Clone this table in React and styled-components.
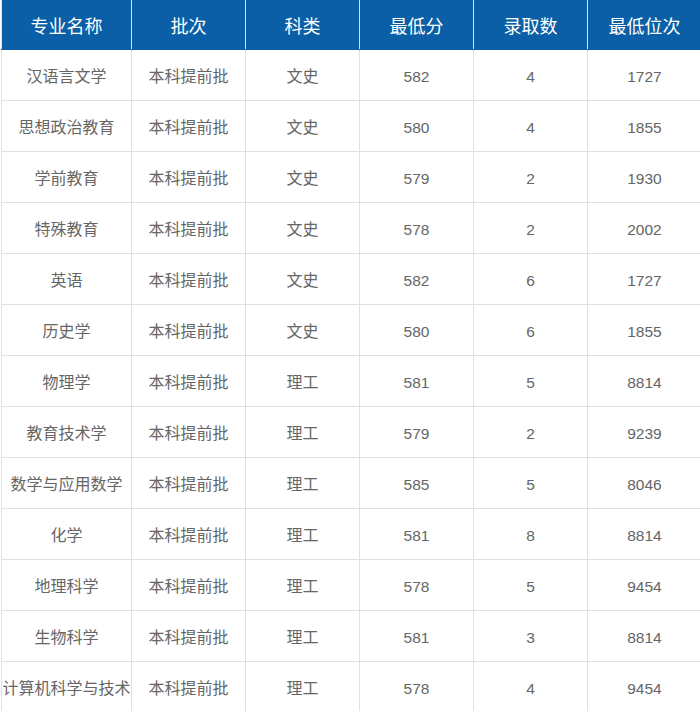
import React from "react";
import styled, { createGlobalStyle } from "styled-components";

const Global = createGlobalStyle`
  html, body { margin: 0; padding: 0; background: #fff; }
  body { overflow: hidden; }
`;

const Wrap = styled.div`
  padding-left: 1px;
  width: 720px;
`;

const Table = styled.table`
  border-collapse: collapse;
  table-layout: fixed;
  width: 700px;
  font-family: "Noto Sans CJK SC", "Microsoft YaHei", sans-serif;
`;

const Col = styled.col`
  width: ${(p) => (p.$wide ? "130px" : "114px")};
`;

const Th = styled.th`
  height: 49px;
  padding: 0;
  background: #0a5fa6;
  color: #fff;
  font-size: 18px;
  font-weight: normal;
  text-align: center;
  border: 1px solid #e0e0e0;
  border-left-color: ${(p) => (p.$first ? "#e0e0e0" : "#fff")};
  border-top: none;
  border-bottom-color: #0a5fa6;
`;

const Td = styled.td`
  height: 50px;
  padding: 0;
  color: #666;
  font-size: 16px;
  text-align: center;
  border: 1px solid #e0e0e0;
  white-space: nowrap;
  overflow: hidden;
`;

const Num = styled(Td)`
  font-family: "Liberation Sans", Arial, sans-serif;
  font-size: 15.5px;
  padding-top: 3px;
  height: 47px;
`;

const headers = ["专业名称", "批次", "科类", "最低分", "录取数", "最低位次"];
const rows = [
  ["汉语言文学", "本科提前批", "文史", "582", "4", "1727"],
  ["思想政治教育", "本科提前批", "文史", "580", "4", "1855"],
  ["学前教育", "本科提前批", "文史", "579", "2", "1930"],
  ["特殊教育", "本科提前批", "文史", "578", "2", "2002"],
  ["英语", "本科提前批", "文史", "582", "6", "1727"],
  ["历史学", "本科提前批", "文史", "580", "6", "1855"],
  ["物理学", "本科提前批", "理工", "581", "5", "8814"],
  ["教育技术学", "本科提前批", "理工", "579", "2", "9239"],
  ["数学与应用数学", "本科提前批", "理工", "585", "5", "8046"],
  ["化学", "本科提前批", "理工", "581", "8", "8814"],
  ["地理科学", "本科提前批", "理工", "578", "5", "9454"],
  ["生物科学", "本科提前批", "理工", "581", "3", "8814"],
  ["计算机科学与技术", "本科提前批", "理工", "578", "4", "9454"],
];

export default function App() {
  return (
    <Wrap>
      <Global />
      <Table>
        <colgroup>
          {headers.map((h, i) => (
            <Col key={h} $wide={i === 0} />
          ))}
        </colgroup>
        <thead>
          <tr>
            {headers.map((h, i) => (
              <Th key={h} $first={i === 0}>{h}</Th>
            ))}
          </tr>
        </thead>
        <tbody>
          {rows.map((r) => (
            <tr key={r[0]}>
              <Td>{r[0]}</Td>
              <Td>{r[1]}</Td>
              <Td>{r[2]}</Td>
              <Num>{r[3]}</Num>
              <Num>{r[4]}</Num>
              <Num>{r[5]}</Num>
            </tr>
          ))}
        </tbody>
      </Table>
    </Wrap>
  );
}
